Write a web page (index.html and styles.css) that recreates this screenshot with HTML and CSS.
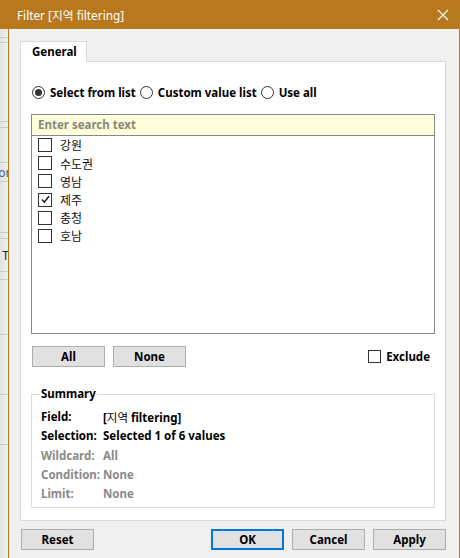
FILE: index.html
```html
<!DOCTYPE html>
<html>
<head>
<meta charset="utf-8">
<link rel="stylesheet" href="styles.css">
</head>
<body>
<div class="screen">
  <div class="titlebar">
    <span class="title">Filter [지역 filtering]</span>
    <svg class="close" width="12" height="12" viewBox="0 0 12 12"><path d="M1 1L11 11M11 1L1 11" stroke="#fff" stroke-width="1.1" fill="none"/></svg>
  </div>
  <div class="main">
    <div class="bgstrip">
      <div class="bl h38"></div>
      <div class="bl h5"></div>
      <div class="bl h79"></div>
      <div class="bl h6"></div>
      <div class="bl h35"></div>
      <div class="bgtext blue h19">on</div>
      <div class="bl h51"></div>
      <div class="bl h6"></div>
      <div class="bgtext dark h33">T</div>
      <div class="bl h8"></div>
      <div class="bl h55"></div>
      <div class="bl h60"></div>
      <div class="bl h50"></div>
    </div>
    <div class="dialog">
      <div class="tabs">
        <div class="tab">General</div>
      </div>
      <div class="panel">
        <div class="radios">
          <label class="radio-item"><span class="radio on"></span>Select from list</label>
          <label class="radio-item"><span class="radio"></span>Custom value list</label>
          <label class="radio-item"><span class="radio"></span>Use all</label>
        </div>
        <div class="listbox">
          <div class="search">Enter search text</div>
          <div class="items">
            <div class="item"><span class="cb"></span><span class="kr">강원</span></div>
            <div class="item"><span class="cb"></span><span class="kr">수도권</span></div>
            <div class="item"><span class="cb"></span><span class="kr">영남</span></div>
            <div class="item"><span class="cb"><svg width="11" height="11" viewBox="0 0 11 11"><path d="M2 5.5L4.3 8.2L9 2.2" stroke="#111" stroke-width="1.4" fill="none"/></svg></span><span class="kr">제주</span></div>
            <div class="item"><span class="cb"></span><span class="kr">충청</span></div>
            <div class="item"><span class="cb"></span><span class="kr">호남</span></div>
          </div>
        </div>
        <div class="btnrow">
          <div class="btn">All</div>
          <div class="btn">None</div>
          <label class="exclude"><span class="cb small"></span>Exclude</label>
        </div>
        <fieldset class="summary">
          <legend>Summary</legend>
          <div class="srow"><span class="lbl">Field:</span><span class="val">[<span class="krb">지역</span> filtering]</span></div>
          <div class="srow"><span class="lbl">Selection:</span><span class="val">Selected 1 of 6 values</span></div>
          <div class="srow dis"><span class="lbl">Wildcard:</span><span class="val">All</span></div>
          <div class="srow dis"><span class="lbl">Condition:</span><span class="val">None</span></div>
          <div class="srow dis"><span class="lbl">Limit:</span><span class="val">None</span></div>
        </fieldset>
      </div>
      <div class="footer">
        <div class="btn reset">Reset</div>
        <div class="footright">
          <div class="btn default">OK</div>
          <div class="btn">Cancel</div>
          <div class="btn">Apply</div>
        </div>
      </div>
    </div>
  </div>
</div>
</body>
</html>
```

FILE: styles.css
```css
html, body {
  margin: 0;
  padding: 0;
  background: #f0f0f0;
}
body {
  font-family: "Noto Sans", "Noto Sans CJK KR", sans-serif;
  font-size: 11.5px;
  color: #000;
  width: 460px;
  height: 558px;
  overflow: hidden;
}
.screen {
  display: flex;
  flex-direction: column;
  width: 460px;
  height: 558px;
}
.titlebar {
  height: 29px;
  flex: none;
  background: #b8791e;
  display: flex;
  align-items: center;
  justify-content: space-between;
  padding: 0 10px 0 17px;
  box-sizing: border-box;
}
.title {
  color: #fff;
  font-family: "Noto Sans", "Noto Sans CJK KR", sans-serif;
  font-size: 11.8px;
}
.close {
  display: block;
  margin-right: 1px;
}
.main {
  flex: 1;
  display: flex;
  min-height: 0;
}
.bgstrip {
  width: 8px;
  flex: none;
  background: linear-gradient(to right, #e2e2e2, #efefef);
  display: flex;
  flex-direction: column;
  overflow: hidden;
}
.bl {
  border-bottom: 1px solid #c9c9c9;
  box-sizing: border-box;
  flex: none;
}
.h5 { height: 5px; }
.h6 { height: 6px; }
.h8 { height: 8px; }
.h19 { height: 19px; }
.h33 { height: 33px; }
.h35 { height: 35px; }
.h38 { height: 9px; }
.h50 { height: 50px; }
.h51 { height: 51px; }
.h55 { height: 55px; }
.h60 { height: 60px; }
.h79 { height: 79px; }
.bgtext {
  flex: none;
  font-size: 12px;
  line-height: 19px;
  white-space: nowrap;
  display: flex;
  justify-content: flex-end;
  box-sizing: border-box;
  border-bottom: 1px solid #c9c9c9;
}
.bgtext.blue { color: #3d5f94; margin-right: -5px; }
.bgtext.dark { color: #222; align-items: center; margin-right: -1px; }
.dialog {
  flex: 1;
  border-left: 1px solid #b8791e;
  border-right: 1px solid #b8791e;
  background: #f0f0f0;
  padding: 12px 13px 0 11px;
  display: flex;
  flex-direction: column;
  min-width: 0;
}
.tabs {
  display: flex;
  height: 20px;
  position: relative;
  z-index: 1;
}
.tab {
  width: 67px;
  box-sizing: border-box;
  height: 21px;
  background: #fff;
  border: 1px solid #d9d9d9;
  border-bottom: none;
  font-weight: bold;
  padding-left: 11px;
  line-height: 20px;
}
.panel {
  background: #fff;
  border: 1px solid #d9d9d9;
  height: 460px;
  box-sizing: border-box;
  padding: 0 10px 12px 10px;
  display: flex;
  flex-direction: column;
}
.radios {
  display: flex;
  align-items: center;
  gap: 4px;
  margin-top: 23px;
  height: 16px;
  font-weight: bold;
  padding-left: 1px;
}
.radio-item {
  display: flex;
  align-items: center;
  gap: 5px;
}
.radio {
  width: 13px;
  height: 13px;
  box-sizing: border-box;
  border: 1px solid #333;
  border-radius: 50%;
  display: flex;
  align-items: center;
  justify-content: center;
}
.radio.on::after {
  content: "";
  width: 7px;
  height: 7px;
  border-radius: 50%;
  background: #333;
}
.listbox {
  margin-top: 13px;
  height: 222px;
  box-sizing: border-box;
  border: 1px solid #828790;
  display: flex;
  flex-direction: column;
}
.search {
  height: 21px;
  box-sizing: border-box;
  background: #ffffdc;
  border-bottom: 1px solid #828790;
  color: #888878;
  font-weight: bold;
  padding-left: 6px;
  line-height: 20px;
}
.items {
  display: flex;
  flex-direction: column;
  padding-left: 6px;
}
.item {
  display: flex;
  align-items: center;
  height: 18.2px;
  gap: 8px;
}
.cb {
  width: 14px;
  height: 14px;
  box-sizing: border-box;
  border: 1px solid #333;
  background: #fff;
  display: flex;
  align-items: center;
  justify-content: center;
  flex: none;
}
.cb.small {
  width: 13px;
  height: 13px;
}
.kr {
  font-family: "Noto Sans CJK KR", sans-serif;
  font-size: 12px;
  color: #111;
}
.krb {
  font-family: "Noto Sans CJK KR", sans-serif;
  font-weight: normal;
}
.btnrow {
  margin-top: 12px;
  display: flex;
  align-items: center;
  gap: 8px;
  padding-left: 1px;
  height: 21px;
}
.btn {
  width: 73px;
  height: 21px;
  box-sizing: border-box;
  background: #e1e1e1;
  border: 1px solid #adadad;
  font-weight: bold;
  display: flex;
  align-items: center;
  justify-content: center;
}
.exclude {
  margin-left: auto;
  display: flex;
  align-items: center;
  gap: 5px;
  font-weight: bold;
  margin-right: 5px;
}
.summary {
  margin: 19px 0 0 0;
  padding: 0 0 4px 9px;
  border: 1px solid #dcdcdc;
  flex: 1;
  min-width: 0;
}
.summary legend {
  font-weight: bold;
  padding: 0 1px;
  margin-left: -1px;
  line-height: 16px;
}
.srow {
  display: flex;
  height: 19.2px;
  align-items: center;
  font-weight: bold;
}
.srow:first-of-type {
  margin-top: 5px;
}
.lbl {
  width: 62px;
  flex: none;
}
.srow.dis {
  color: #8a8a8a;
}
.footer {
  margin-top: 8px;
  display: flex;
  justify-content: space-between;
  padding-left: 1px;
}
.footright {
  display: flex;
  gap: 8px;
}
.btn.default {
  border: 2px solid #0078d7;
}
```
